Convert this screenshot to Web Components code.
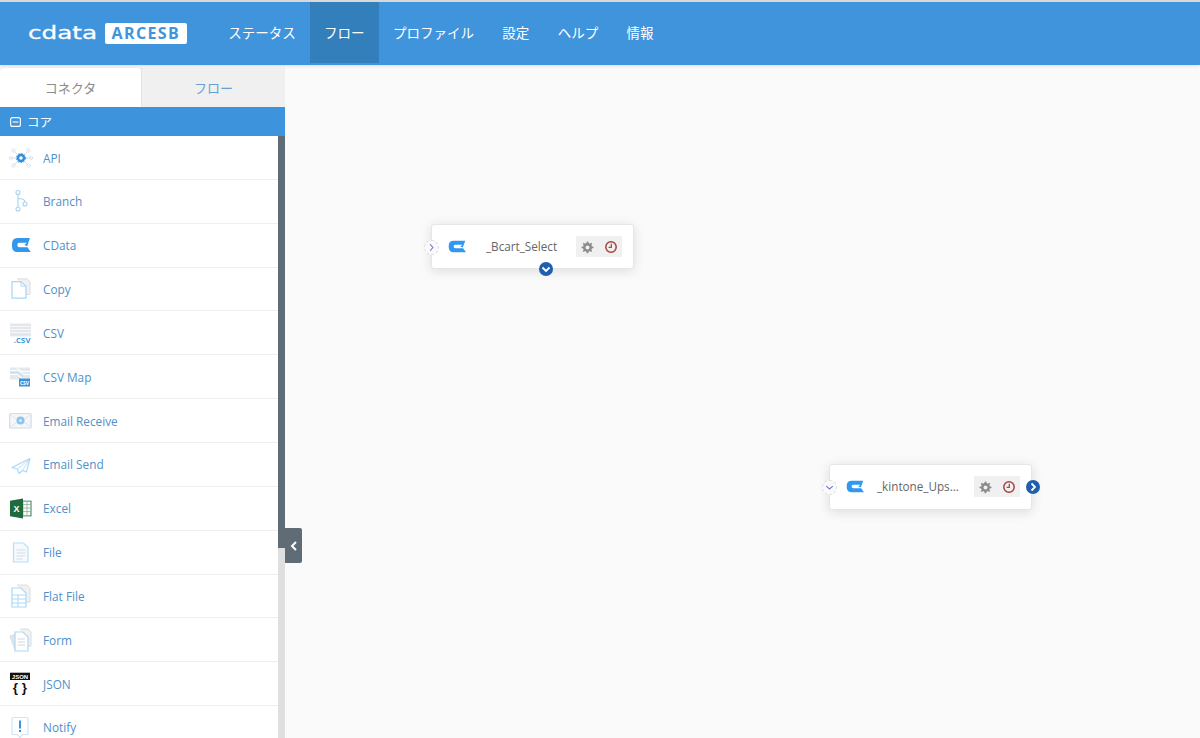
<!DOCTYPE html>
<html lang="ja">
<head>
<meta charset="utf-8">
<title>ArcESB</title>
<style>
    html, body { margin: 0; height: 100%; overflow: hidden; }
    body { font-family: "Open Sans", "Noto Sans CJK JP", sans-serif; background: #fafafa; }
</style>
</head>
<body>
<arc-app>
    <arc-header slot="header">
        <nav-item>ステータス</nav-item>
        <nav-item active>フロー</nav-item>
        <nav-item>プロファイル</nav-item>
        <nav-item>設定</nav-item>
        <nav-item>ヘルプ</nav-item>
        <nav-item>情報</nav-item>
    </arc-header>
    <side-panel slot="side">
        <connector-row icon="api">API</connector-row>
        <connector-row icon="branch">Branch</connector-row>
        <connector-row icon="cdata">CData</connector-row>
        <connector-row icon="copy">Copy</connector-row>
        <connector-row icon="csv">CSV</connector-row>
        <connector-row icon="csvmap">CSV Map</connector-row>
        <connector-row icon="receive">Email Receive</connector-row>
        <connector-row icon="send">Email Send</connector-row>
        <connector-row icon="excel">Excel</connector-row>
        <connector-row icon="file">File</connector-row>
        <connector-row icon="flat">Flat File</connector-row>
        <connector-row icon="form">Form</connector-row>
        <connector-row icon="json">JSON</connector-row>
        <connector-row icon="notify">Notify</connector-row>
    </side-panel>
    <flow-canvas slot="canvas">
        <flow-node style="left:146px;top:159px;height:45px" name="_Bcart_Select" text-left="54" in-dir="right" out-dir="bottom"></flow-node>
        <flow-node style="left:544px;top:399px;height:46px" name="_kintone_Ups..." text-left="47" in-dir="down" out-dir="right"></flow-node>
    </flow-canvas>
</arc-app>

<script>
// shared svg for the connector icons, all drawn on a 24x24 box
const CDATA_PATH = 'M24 4H8Q1 4 1 11V13Q1 20 8 20H25L21 14.500H11Q8 14.500 8 13V11Q8 9.500 11 9.500H20L17 12L20.500 13.500Z';

const ICONS = {
    api: `<g fill="none" stroke="#d3deea" stroke-width="1">
            <path d="M12 12L5 5M12 12L19 5M12 12L5 19M12 12L19 19M12 12H2M12 12H22"/>
            <circle cx="4.500" cy="4.500" r="1.600" fill="#fff"/><circle cx="19.500" cy="4.500" r="1.600" fill="#fff"/>
            <circle cx="4.500" cy="19.500" r="1.600" fill="#fff"/><circle cx="19.500" cy="19.500" r="1.600" fill="#fff"/>
            <circle cx="1.800" cy="12" r="1.400" fill="#fff"/><circle cx="22.200" cy="12" r="1.400" fill="#fff"/>
          </g>
          <circle cx="12" cy="12" r="3" fill="#fff" stroke="#2f8fdd" stroke-width="2.400"/>
          <circle cx="12" cy="12" r="4.600" fill="none" stroke="#2f8fdd" stroke-width="1" stroke-dasharray="1.500 1.500"/>`,
    branch: `<g fill="none" stroke="#a9d3f2" stroke-width="1.100">
            <circle cx="9" cy="3.500" r="2"/><circle cx="9" cy="20" r="2"/><circle cx="16" cy="15" r="2"/>
            <path d="M9 5.500V18M9 9.500Q16 9.500 16 13"/></g>`,
    cdata: `<g transform="translate(2.200 1.500) scale(.78 .875)"><path d="${CDATA_PATH}" fill="#3397ee"/></g>`,
    copy: `<g transform="translate(-1 0) scale(1 .92)">
           <path d="M9 2H19L22 5V19H18" fill="#f1f1f1" stroke="#dcdcdc"/>
           <path d="M4 5H13L18 10V23H4Z" fill="#fff" stroke="#a9d9f6" stroke-width="1.300"/>
           <path d="M13 5V10H18" fill="none" stroke="#a9d9f6"/></g>`,
    csv: `<rect x="1" y="2.500" width="21" height="13" fill="#e3e6ea"/>
          <path d="M1 5.500H22M1 8.500H22M1 11.500H22" stroke="#fff" stroke-width=".7"/>
          <text x="13" y="21.500" font-family="Open Sans, sans-serif" font-size="9.500" font-weight="600" fill="#3d94dc" text-anchor="middle">.csv</text>`,
    csvmap: `<g transform="translate(0 2.500)"><rect x="1" y="0" width="20" height="12" fill="#e4e8ec"/>
          <path d="M1 3H10L15 7H21M1 7H8L13 11H19M7 0L13 4H21" fill="none" stroke="#fff" stroke-width="1"/>
          <path d="M1 5H9L14 9" fill="none" stroke="#b5d8f3" stroke-width=".8"/>
          <rect x="10" y="11" width="11" height="8" fill="#3d94dc"/>
          <text x="15.500" y="17.500" font-family="Open Sans, sans-serif" font-size="5" font-weight="700" fill="#fff" text-anchor="middle">CSV</text></g>`,
    receive: `<rect x=".6" y="4.500" width="21.500" height="14.500" rx="1" fill="#f4f6f9" stroke="#d4dce6" stroke-width="1.200"/>
          <path d="M1 5.500L9 11M22 5.500L14 11M1 18L8 13M22 18L15 13" stroke="#dfe5ec" fill="none"/>
          <circle cx="11.500" cy="11.500" r="4" fill="#8cc4ef"/>
          <circle cx="11.500" cy="11.500" r="1.500" fill="#d8ecfb"/>`,
    send: `<g transform="translate(0 1.500)"><path d="M21 5L3 14L8.500 15.500L10 20L13.500 17L17.500 18.500Z" fill="#fff" stroke="#a9d7f6" stroke-width="1.100" stroke-linejoin="round"/>
           <path d="M21 5L8.500 15.500M21 5L13.500 17" fill="none" stroke="#a9d7f6" stroke-width=".8"/></g>`,
    excel: `<g transform="translate(0 2.500) scale(1 .87)"><rect x="11" y="3" width="11" height="17" fill="#fff" stroke="#2f7d4f"/>
           <path d="M14 3V20M18 3V20M11 7H22M11 11H22M11 15H22" stroke="#7fae92" stroke-width=".8"/>
           <path d="M1 2.500L14 0V23L1 20.500Z" fill="#1f6b3d"/></g>
           <text x="7.500" y="16" font-family="Liberation Sans, sans-serif" font-size="9" font-weight="700" fill="#fff" text-anchor="middle">X</text>`,
    file: `<path d="M4.500 3H14.500L19 7.500V22H4.500Z" fill="#f4fafe" stroke="#b6dff8" stroke-width="1.200"/>
           <path d="M7.500 10H16.500M7.500 13H16.500M7.500 16H16.500M7.500 19H13.500" stroke="#d5dde4" stroke-width="1"/>`,
    flat: `<g transform="translate(-1 0)"><path d="M9 1H19L22 4V18H18" fill="#f1f1f1" stroke="#dcdcdc"/>
           <path d="M4 4H13L18 9V23H4Z" fill="#fff" stroke="#a9d9f6" stroke-width="1.200"/>
           <path d="M4 11H18M4 15H18M4 19H18M10 11V23" stroke="#a9d9f6" stroke-width="1"/></g>`,
    form: `<path d="M11 1H19L22 4V18H19" fill="#f1f1f1" stroke="#dcdcdc"/>
           <path d="M1 8L7 6L11 21L6 22Z" fill="#e4e4e4" stroke="#d4d4d4" stroke-width=".7"/>
           <path d="M6 4H14L19 9V23H6Z" fill="#fff" stroke="#a9d9f6" stroke-width="1.200"/>
           <path d="M9 11H16M9 14H16M9 17H16" stroke="#cfd8df" stroke-width="1"/>`,
    json: `<rect x="1" y=".7" width="20" height="7.300" fill="#111"/>
           <text x="11" y="6.500" font-family="Liberation Sans, sans-serif" font-size="6" font-weight="700" fill="#fff" text-anchor="middle">JSON</text>
           <text x="11" y="20" font-family="Liberation Sans, sans-serif" font-size="13.500" font-weight="700" fill="#111" text-anchor="middle">{ }</text>`,
    notify: `<g transform="translate(-1 -.5)"><path d="M5 3H19Q20 3 20 4V19Q20 20 19 20H15L12 23L9 20H5Q4 20 4 19V4Q4 3 5 3Z" fill="#fff" stroke="#cfe7f8" stroke-width="1.200"/>
           <rect x="11" y="6" width="2" height="8" fill="#3d94dc"/><rect x="11" y="15.500" width="2" height="2" fill="#3d94dc"/></g>`
};

class ArcApp extends HTMLElement {
    constructor() {
        super();
        this.attachShadow({ mode: 'open' });
        this.shadowRoot.innerHTML = `
            <style>
                :host { display: flex; flex-direction: column; height: 738px; overflow: hidden; background: #fafafa; }
                .main { flex: 1; display: flex; min-height: 0; }
            </style>
            <slot name="header"></slot>
            <div class="main">
                <slot name="side"></slot>
                <slot name="canvas"></slot>
            </div>
        `;
    }
}

class ArcHeader extends HTMLElement {
    constructor() {
        super();
        this.attachShadow({ mode: 'open' });
        this.shadowRoot.innerHTML = `
            <style>
                :host { display: block; flex: none; border-top: 2px solid #d8d8d8; box-shadow: 0 1px 3px rgba(0,0,0,.12); position: relative; z-index: 2; }
                .bar { display: flex; height: 63px; background: #3f94dc; }
                .logo { display: flex; align-items: center; width: 214px; flex: none; padding-left: 28px; box-sizing: border-box; gap: 8px; }
                .word { color: #fff; font: 400 18px/24px "DejaVu Sans", sans-serif; -webkit-text-stroke: .3px #fff; transform: scaleX(1.37); transform-origin: left center; width: 69px; flex: none; margin-top: -2px; }
                .badge { background: #fff; color: #3f94dc; border-radius: 2px; font: 700 16px/21px "Open Sans", sans-serif; padding: 0 6.500px; letter-spacing: 1.400px; height: 21px; flex: none; }
                nav { display: flex; align-items: flex-start; }
            </style>
            <div class="bar">
                <div class="logo"><span class="word">cdata</span><span class="badge">ARCESB</span></div>
                <nav><slot></slot></nav>
            </div>
        `;
    }
}

class NavItem extends HTMLElement {
    constructor() {
        super();
        this.attachShadow({ mode: 'open' });
        this.shadowRoot.innerHTML = `
            <style>
                :host { display: block; height: 61px; line-height: 60px; padding: 0 14.200px; color: #fff; font-size: 13.500px; font-family: "Noto Sans CJK JP", sans-serif; font-weight: 400; }
                :host([active]) { background: #337fbc; }
            </style>
            <slot></slot>
        `;
    }
}

class SidePanel extends HTMLElement {
    constructor() {
        super();
        this.attachShadow({ mode: 'open' });
        this.shadowRoot.innerHTML = `
            <style>
                :host { display: flex; flex-direction: column; width: 285px; flex: none; height: 100%; background: #fff; }
                .tabs { display: grid; grid-template-columns: 141px 144px; height: 42px; background: #f7f7f7; flex: none; }
                .tab { display: flex; align-items: center; justify-content: center; font: 400 13px "Noto Sans CJK JP", sans-serif; margin-top: 3px; }
                .tab.on { background: #fff; color: #8a8a8a; border-radius: 3px 3px 0 0; box-shadow: 0 0 1px #ccc; }
                .tab.off { background: #f0f0f0; color: #6a9fd0; border-left: 1px solid #e2e2e2; }
                .group { display: flex; align-items: center; gap: 6px; height: 29px; background: #3d94dc; color: #fff; font: 400 12.500px/27px "Noto Sans CJK JP", sans-serif; padding-left: 10px; flex: none; }
                .body { flex: 1; display: flex; min-height: 0; }
                .list { flex: 1; overflow: hidden; min-width: 0; padding-top: .1px; }
                .bar { width: 7px; flex: none; display: flex; flex-direction: column; background: #dfdfdf; }
                .thumb { height: 412px; background: #5f6b75; }
            </style>
            <div class="tabs">
                <div class="tab on">コネクタ</div>
                <div class="tab off">フロー</div>
            </div>
            <div class="group">
                <svg width="11" height="10" viewBox="0 0 11 10"><rect x=".6" y=".6" width="9.800" height="8.800" rx="2" fill="none" stroke="#fff" stroke-width="1.100"/><path d="M2.500 5H8.500" stroke="#fff" stroke-width="1.100"/></svg>
                <span>コア</span>
            </div>
            <div class="body">
                <div class="list"><slot></slot></div>
                <div class="bar"><div class="thumb"></div></div>
            </div>
        `;
    }
}

class ConnectorRow extends HTMLElement {
    constructor() {
        super();
        this.attachShadow({ mode: 'open' });
        const icon = ICONS[this.getAttribute('icon')] || '';
        this.shadowRoot.innerHTML = `
            <style>
                :host { display: flex; align-items: center; height: 43.850px; box-sizing: border-box; border-bottom: 1px solid #efefef; padding-left: 9px; gap: 10px; color: #4f90c9; font: 400 11.800px "Open Sans", sans-serif; }
                svg { width: 24px; height: 24px; flex: none; }
            </style>
            <svg viewBox="0 0 24 24">${icon}</svg>
            <slot></slot>
        `;
    }
}

class FlowCanvas extends HTMLElement {
    constructor() {
        super();
        this.attachShadow({ mode: 'open' });
        this.shadowRoot.innerHTML = `
            <style>
                :host { display: block; flex: 1; position: relative; background: #fafafa; min-width: 0; }
                .handle { position: absolute; left: 0; top: 463px; width: 17px; height: 35px; background: #5f6b75; border-radius: 0 2px 2px 0; display: flex; align-items: center; justify-content: center; }
            </style>
            <div class="handle">
                <svg width="8" height="10" viewBox="0 0 8 10"><path d="M6 1L2 5L6 9" fill="none" stroke="#fff" stroke-width="2"/></svg>
            </div>
            <slot></slot>
        `;
    }
}

class FlowNode extends HTMLElement {
    constructor() {
        super();
        this.attachShadow({ mode: 'open' });
        const name = this.getAttribute('name');
        const textLeft = this.getAttribute('text-left');
        const inDir = this.getAttribute('in-dir');
        const outDir = this.getAttribute('out-dir');
        const inPath = inDir === 'right' ? 'M5.500 3.500L8.500 7L5.500 10.500' : 'M3.500 5.500L7 8.500L10.500 5.500';
        const outPath = outDir === 'right' ? 'M5.500 3.500L9 7L5.500 10.500' : 'M3.500 5.500L7 9L10.500 5.500';
        this.shadowRoot.innerHTML = `
            <style>
                :host { position: absolute; display: flex; align-items: center; width: 203px; box-sizing: border-box; background: #fff; border: 1px solid #e6e6e6; border-radius: 3px; box-shadow: 0 2px 12px rgba(0,0,0,.12); font: 400 11.700px "Open Sans", sans-serif; color: #666; }
                .icon { position: absolute; left: 16px; top: 50%; margin-top: -7px; width: 18px; height: 13px; }
                .name { position: absolute; left: ${textLeft}px; white-space: nowrap; margin-top: -1.500px; }
                .tools { position: absolute; right: 11px; top: 11px; width: 46px; height: 21px; background: #f0f0f0; display: flex; align-items: center; justify-content: space-between; padding: 0 4px; box-sizing: border-box; }
                .tools svg { width: 14px; height: 14px; }
                .port { position: absolute; width: 14px; height: 14px; border-radius: 50%; }
                .in { left: -8px; top: 50%; margin-top: -7px; border: 1px dashed #dcdcdc; background: #fafafa; box-sizing: border-box; width: 15px; height: 15px; }
                .in svg { display: block; margin: 0; }
                .out { background: #1f5fae; }
                .out.bottom { left: 107px; bottom: -8px; }
                .out.right { right: -9px; top: 50%; margin-top: -7px; }
            </style>
            <div class="port in"><svg width="13" height="13" viewBox="0 0 14 14"><path d="${inPath}" fill="none" stroke="#6f78c8" stroke-width="1.200"/></svg></div>
            <svg class="icon" viewBox="0 3 25 18" preserveAspectRatio="none"><path d="${CDATA_PATH}" fill="#3397ee"/></svg>
            <span class="name">${name}</span>
            <div class="tools">
                <svg viewBox="0 0 14 14"><path d="M7 1.500L8.200 1.500L8.600 3.100L10 3.700L11.400 2.800L12.200 3.700L11.300 5.100L11.900 6.400L13.500 6.800V8L11.900 8.400L11.300 9.700L12.200 11.100L11.200 12L9.900 11.100L8.600 11.700L8.200 13.300H6.800L6.400 11.700L5 11.100L3.700 12L2.800 11.100L3.700 9.700L3.100 8.400L1.500 8V6.800L3.100 6.400L3.700 5.100L2.800 3.700L3.700 2.800L5 3.700L6.400 3.100L6.800 1.500Z" fill="#8b8b8b"/><circle cx="7.500" cy="7.400" r="2" fill="#f0f0f0"/></svg>
                <svg viewBox="0 0 14 14"><circle cx="7" cy="7" r="5.200" fill="none" stroke="#a4443f" stroke-width="1.500"/><path d="M7.300 3.800V7.300H4.600" fill="none" stroke="#a4443f" stroke-width="1.200"/></svg>
            </div>
            <div class="port out ${outDir}"><svg width="14" height="14" viewBox="0 0 14 14"><path d="${outPath}" fill="none" stroke="#fff" stroke-width="1.800"/></svg></div>
        `;
    }
}

customElements.define('arc-app', ArcApp);
customElements.define('arc-header', ArcHeader);
customElements.define('nav-item', NavItem);
customElements.define('side-panel', SidePanel);
customElements.define('connector-row', ConnectorRow);
customElements.define('flow-canvas', FlowCanvas);
customElements.define('flow-node', FlowNode);
</script>
</body>
</html>
